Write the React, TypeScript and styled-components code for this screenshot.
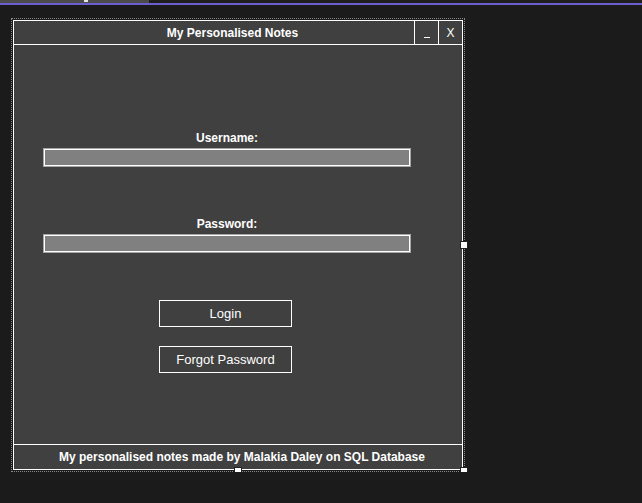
import React from 'react'
import styled, { createGlobalStyle } from 'styled-components'

const GlobalStyle = createGlobalStyle`
  html, body {
    margin: 0;
    padding: 0;
    background: #1b1b1b;
  }

  body {
    font-family: 'Liberation Sans', Arial, sans-serif;
    color: #ffffff;
  }
`

const App = () => {
  return (
    <>
      <GlobalStyle />
      <TopStrip>
        <TabArea>
          <Caret />
        </TabArea>
      </TopStrip>
      <AccentLine />

      <Canvas>
        <Selection>
          <FormWindow>
            <TitleBar>
              <Title>My Personalised Notes</Title>
              <TitleButton aria-label="Minimise">
                <MinGlyph />
              </TitleButton>
              <TitleButton aria-label="Close">X</TitleButton>
            </TitleBar>

            <Content>
              <Field>
                <FieldLabel>Username:</FieldLabel>
                <TextBox type="text" />
              </Field>

              <Field $gap={51}>
                <FieldLabel>Password:</FieldLabel>
                <TextBox type="password" />
              </Field>

              <ActionButton $gap={48}>Login</ActionButton>
              <ActionButton $gap={19}>Forgot Password</ActionButton>
            </Content>

            <Footer>My personalised notes made by Malakia Daley on SQL Database</Footer>
          </FormWindow>

          <Handle $side="right" />
          <Handle $side="bottom" />
          <Handle $side="corner" />
        </Selection>
      </Canvas>
    </>
  )
}

const TopStrip = styled.div`
  display: flex;
  height: 3px;
  background: #1f1f1f;
`

const TabArea = styled.div`
  position: relative;
  width: 149px;
  background: #4b4b4b;
`

const Caret = styled.span`
  position: absolute;
  left: 84px;
  top: 0;
  width: 4px;
  height: 2px;
  background: #e6e6e6;
`

const AccentLine = styled.div`
  height: 2px;
  background: #6b5fd0;
`

const Canvas = styled.div`
  padding: 13px 0 0 11px;
`

const Selection = styled.div`
  position: relative;
  width: 454px;
  padding: 1px;
  border: 1px dotted #8a8a8a;
  box-sizing: border-box;
`

const FormWindow = styled.div`
  display: flex;
  flex-direction: column;
  width: 450px;
  height: 450px;
  box-sizing: border-box;
  border: 1px solid #ffffff;
  background: #404040;
`

const TitleBar = styled.div`
  display: flex;
  height: 24px;
  box-sizing: border-box;
  border-bottom: 1px solid #ffffff;
`

const Title = styled.div`
  flex: 1;
  display: flex;
  align-items: center;
  justify-content: center;
  padding-left: 37px;
  font-size: 12px;
  font-weight: bold;
`

const TitleButton = styled.div`
  display: flex;
  align-items: center;
  justify-content: center;
  width: 24px;
  box-sizing: border-box;
  border-left: 1px solid #ffffff;
  font-size: 12px;
  line-height: 1;
`

const MinGlyph = styled.span`
  display: block;
  width: 6px;
  height: 1px;
  margin-top: 10px;
  background: #ffffff;
`

const Content = styled.div`
  flex: 1;
  display: flex;
  flex-direction: column;
  align-items: center;
  padding: 86px 52px 0 30px;
`

const Field = styled.div<{ $gap?: number }>`
  display: flex;
  flex-direction: column;
  align-items: center;
  width: 100%;
  margin-top: ${({ $gap }) => $gap ?? 0}px;
`

const FieldLabel = styled.label`
  font-size: 12px;
  font-weight: bold;
  line-height: 14px;
`

const TextBox = styled.input`
  width: 100%;
  height: 17px;
  margin: 4px 0 0;
  padding: 0;
  box-sizing: border-box;
  border: 1px solid #ffffff;
  box-shadow: 0 0 0 1px #a6a6a6;
  background: #808080;
  outline: none;
`

const ActionButton = styled.div<{ $gap: number }>`
  display: flex;
  align-items: center;
  justify-content: center;
  width: 133px;
  height: 27px;
  margin: ${({ $gap }) => $gap}px 3px 0 0;
  box-sizing: border-box;
  border: 1px solid #ffffff;
  font-size: 13px;
`

const Footer = styled.div`
  display: flex;
  align-items: center;
  justify-content: center;
  height: 25px;
  padding-left: 8px;
  box-sizing: border-box;
  border-top: 1px solid #ffffff;
  font-size: 12px;
  font-weight: bold;
`

const Handle = styled.span<{ $side: 'right' | 'bottom' | 'corner' }>`
  position: absolute;
  width: 6px;
  height: 6px;
  background: #ffffff;
  border: 1px solid #222222;
  box-sizing: content-box;
  left: ${({ $side }) => ($side === 'bottom' ? 'calc(50% - 4px)' : 'calc(100% - 4px)')};
  top: ${({ $side }) => ($side === 'right' ? 'calc(50% - 4px)' : 'calc(100% - 4px)')};
`

export default App
